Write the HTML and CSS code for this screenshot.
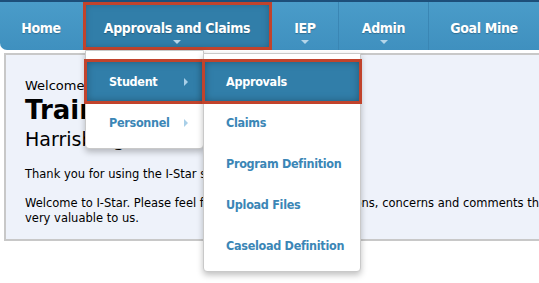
FILE: index.html
```html
<!DOCTYPE html>
<html lang="en">
  <head>
    <meta charset="UTF-8" />
    <title>I-Star</title>
    <link rel="stylesheet" href="styles.css">
  </head>
  <body>
    <header class="topbar">
      <ul class="nav">
        <li class="nav-item"><a href="#">Home</a></li>
        <li class="nav-item has-sub is-open">
          <a href="#">Approvals and Claims</a>
          <span class="caret"></span>
          <ul class="dropdown level-1">
            <li class="drop-item is-open">
              <a href="#">Student</a>
              <span class="arrow"></span>
              <ul class="dropdown level-2">
                <li class="drop-item is-open"><a href="#">Approvals</a></li>
                <li class="drop-item"><a href="#">Claims</a></li>
                <li class="drop-item"><a href="#">Program Definition</a></li>
                <li class="drop-item"><a href="#">Upload Files</a></li>
                <li class="drop-item"><a href="#">Caseload Definition</a></li>
              </ul>
            </li>
            <li class="drop-item">
              <a href="#">Personnel</a>
              <span class="arrow"></span>
            </li>
          </ul>
        </li>
        <li class="nav-item has-sub"><a href="#">IEP</a><span class="caret"></span></li>
        <li class="nav-item has-sub"><a href="#">Admin</a><span class="caret"></span></li>
        <li class="nav-item"><a href="#">Goal Mine</a></li>
      </ul>
    </header>

    <main class="welcome">
      <p class="hello">Welcome</p>
      <h1 class="org">Training District</h1>
      <p class="district">Harrisburg School District</p>
      <p class="msg">Thank you for using the I-Star system.</p>
      <p class="msg">Welcome to I-Star. Please feel free to send us your questions, concerns and comments that are<br>very valuable to us.</p>
    </main>
  </body>
</html>
```

FILE: styles.css
```css
:root {
  --bar-dark: #317ea9;
  --line-color: #1d4f7a;
  --link-color: #3b86b6;
  --mark-color: #c1432c;
}

* {
  margin: 0;
  padding: 0;
  box-sizing: border-box;
}

html,
body {
  width: 539px;
  height: 283px;
  overflow: hidden;
}

body {
  font-family: "DejaVu Sans", Verdana, sans-serif;
  background: #fff;
  color: #000;
}

ul {
  list-style: none;
}

a {
  text-decoration: none;
  white-space: nowrap;
}

.topbar {
  border-top: 2px solid var(--line-color);
  background: linear-gradient(#4a9cc9, #3f90bf);
  border-bottom-left-radius: 7px;
  height: 50px;
  position: relative;
  z-index: 10;
}

.nav {
  display: flex;
  height: 100%;
}

.nav-item {
  position: relative;
  flex: none;
  display: flex;
  align-items: center;
  justify-content: center;
  height: 100%;
  border-right: 1px solid #3a86b4;
  font-family: "DejaVu Sans Condensed", "DejaVu Sans", sans-serif;
  font-weight: 700;
  font-size: 14px;
  letter-spacing: -0.35px;
}

.nav-item > a {
  color: #fff;
  padding-top: 3px;
  text-shadow: 0 1px 1px rgba(0, 0, 0, 0.25);
}

.nav-item:first-child {
  width: 83px;
  border-right-color: transparent;
}

.nav-item:nth-child(2) {
  width: 189px;
}

.nav-item:nth-child(3) {
  width: 67px;
}

.nav-item:nth-child(4) {
  width: 90px;
}

.nav-item:last-child {
  width: 110px;
  border-right: none;
}

.nav-item.is-open {
  background: var(--bar-dark);
  box-shadow: inset 0 0 8px rgba(0, 0, 0, 0.35);
  outline: 3px solid var(--mark-color);
  outline-offset: -3px;
}

.caret {
  position: absolute;
  left: 50%;
  bottom: 6px;
  margin-left: -4px;
  border-left: 4px solid transparent;
  border-right: 4px solid transparent;
  border-top: 4px solid #b5d6ea;
}

.dropdown {
  position: absolute;
  background: #fff;
  border: 1px solid #c9c9c9;
  border-radius: 0 0 4px 4px;
  box-shadow: 0 3px 6px rgba(0, 0, 0, 0.25);
  font-size: 12.5px;
  letter-spacing: -0.3px;
}

.level-1 {
  top: 48px;
  left: 2px;
  width: 119px;
  padding: 10px 0 5px;
}

.level-2 {
  top: -8px;
  left: 117px;
  width: 158px;
  padding: 7px 0 5px;
}

.drop-item {
  position: relative;
  height: 41px;
  display: flex;
  align-items: center;
}

.drop-item > a {
  color: var(--link-color);
  padding-left: 22px;
}

.level-1 > .drop-item > a {
  padding-left: 23px;
}

.drop-item.is-open {
  background: var(--bar-dark);
  box-shadow: inset 0 0 8px rgba(0, 0, 0, 0.35);
  outline: 3px solid var(--mark-color);
  outline-offset: -1px;
}

.drop-item.is-open > a {
  color: #fff;
}

.arrow {
  position: absolute;
  left: 98px;
  top: 50%;
  margin-top: -4px;
  border-top: 4px solid transparent;
  border-bottom: 4px solid transparent;
  border-left: 4px solid #a9cfe8;
}

.welcome {
  margin: 3px 0 0 4px;
  width: 700px;
  height: 188px;
  background: #eef2fa;
  border: 2px solid #c8c8c8;
  padding: 22px 0 0 19px;
}

.hello {
  font-size: 13px;
  line-height: 18px;
}

.org {
  font-size: 26px;
  line-height: 30px;
}

.district {
  font-size: 19px;
  line-height: 24px;
  margin-top: 2px;
  margin-bottom: 16px;
}

.msg {
  font-size: 11.5px;
  line-height: 15px;
  margin-bottom: 14px;
}
```
